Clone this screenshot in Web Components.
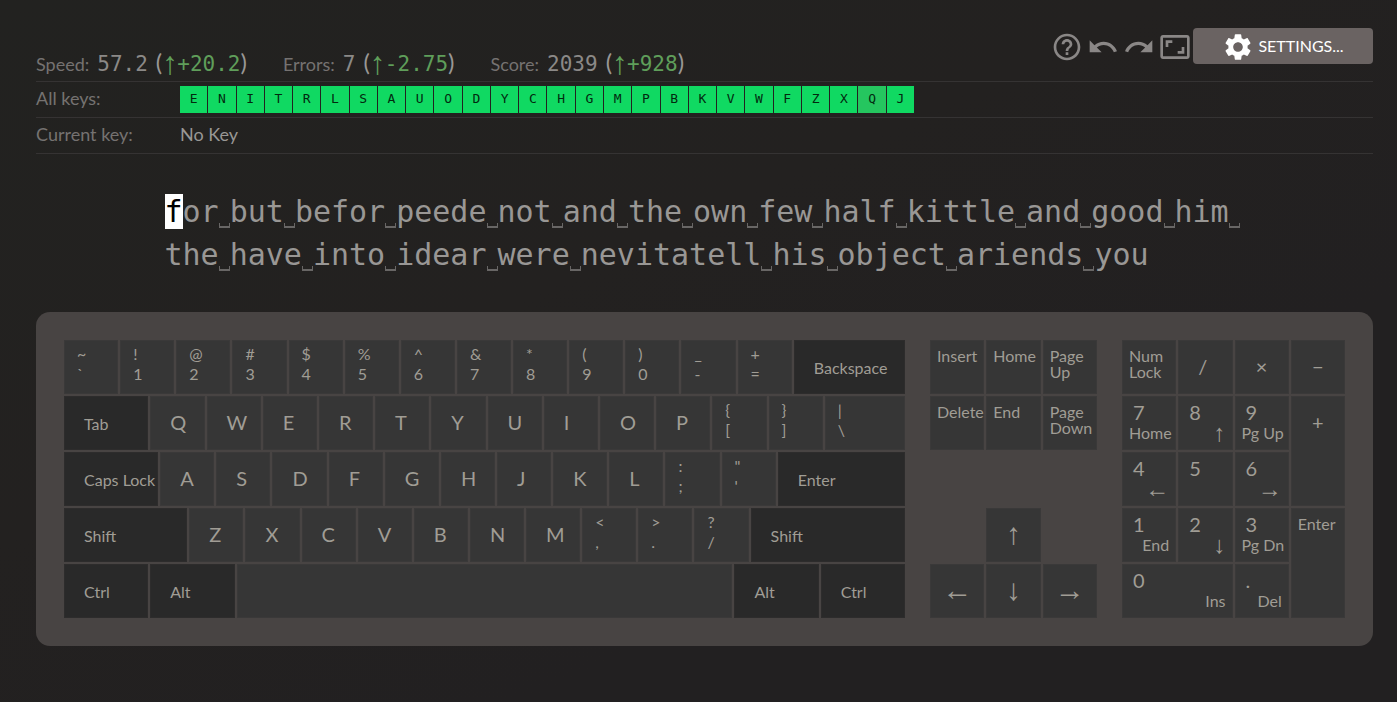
<!DOCTYPE html>
<html lang="en">
<head>
<meta charset="utf-8">
<title>Typing practice</title>
<style>
  body {
    margin: 0;
    min-height: 100vh;
    background: linear-gradient(155deg, #222220 0%, #232120 40%, #222021 70%, #222021 100%);
    color: #999795;
    font-family: Lato, "Noto Sans", sans-serif;
    --mono: "DejaVu Sans Mono", monospace;
    --arrow: "Liberation Serif", serif;
  }
</style>
</head>
<body>
<typing-app></typing-app>
<script>
const define = (name, html, setup) => {
  const template = document.createElement('template');
  template.innerHTML = html;
  customElements.define(name, class extends HTMLElement {
    constructor() {
      super();
      this.attachShadow({ mode: 'open' }).append(template.content.cloneNode(true));
    }
    connectedCallback() { if (setup) setup(this, this.shadowRoot); }
  });
};

/* One figure with its change, e.g. Speed: 57.2 (↑+20.2) */
define('metric-stat', `
<style>
  :host { display: flex; align-items: baseline; white-space: nowrap; line-height: 34px; font-size: 18px; }
  .label { color: #757271; margin-right: 8px; }
  .value, .delta { font: 21px/34px var(--mono); }
  .value { color: #8b8987; margin-right: 8px; }
  .paren { font-size: 24px; }
  .delta, .up { color: #5f9e5a; }
  .up { align-self: center; font: 32px/34px var(--arrow); width: 15px; text-align: center; }
</style>
<span class="label"><slot name="label"></slot></span><span class="value"><slot name="value"></slot></span><span class="paren">(</span><span class="up">↑</span><span class="delta"><slot name="delta"></slot></span><span class="paren">)</span>`);

/* Labelled line under the metrics */
define('info-row', `
<style>
  :host { display: flex; align-items: flex-start; height: 35px; line-height: 33px; border-bottom: 1px solid #353333; font-size: 18px; }
  .label { flex: 0 0 144px; color: #757271; }
  .content { flex: 1; min-width: 0; }
</style>
<span class="label"><slot name="label"></slot></span><div class="content"><slot></slot></div>`);

define('key-set', `
<style>
  :host { display: grid; grid-template-columns: repeat(26, minmax(0, 1fr)); gap: 1px; max-width: 734px; padding-top: 4px; }
  span { height: 27px; background: #10d962; color: #02290f; font: 13px/26px var(--mono); text-align: center; }
  .weak { background: #25c65f; }
</style>`, (host, root) => {
  for (const letter of host.getAttribute('letters')) {
    const tile = document.createElement('span');
    tile.textContent = letter;
    if (host.getAttribute('weak') === letter) tile.className = 'weak';
    root.append(tile);
  }
});

define('icon-button', `
<style>
  :host { display: block; }
  button { display: flex; align-items: center; justify-content: center; width: 36px; height: 36px; padding: 0; border: 0; background: none; color: #8a8786; cursor: pointer; }
</style>
<button type="button"><slot></slot></button>`, (host, root) => {
  root.querySelector('button').setAttribute('aria-label', host.getAttribute('label'));
});

define('settings-button', `
<style>
  :host { display: block; }
  button { display: flex; align-items: center; justify-content: center; gap: 4px; width: 180px; height: 36px; padding: 0; border: 0; border-radius: 4px; background: #6a6362; color: #fff; font: 16px/36px Lato, sans-serif; cursor: pointer; }
</style>
<button type="button"><slot name="icon"></slot><slot></slot></button>`);

/* Text to be typed; the first letter carries the cursor */
define('practice-text', `
<style>
  :host { display: flex; flex-wrap: wrap; max-width: 1080px; margin: 0 auto; font: 30px/43px var(--mono); color: #999795; }
  .word { white-space: nowrap; }
  .space { display: inline-block; box-sizing: border-box; width: 11px; height: 5px; overflow: hidden; border: solid #686665; border-width: 0 1px 2px; vertical-align: -6px; }
  .cursor { background: #fff; color: #000; }
</style>`, (host, root) => {
  const words = host.getAttribute('text').split(' ');
  words.forEach((word, i) => {
    const el = document.createElement('span');
    el.className = 'word';
    if (i === 0) {
      const cursor = document.createElement('span');
      cursor.className = 'cursor';
      cursor.textContent = word[0];
      el.append(cursor, word.slice(1));
    } else el.textContent = word;
    if (i < words.length - 1) {
      const space = document.createElement('span');
      space.className = 'space';
      space.textContent = ' ';
      el.append(space);
    }
    root.append(el);
  });
});

/* Key cap. The kind attribute picks the legend layout. */
define('key-cap', `
<style>
  :host { box-sizing: border-box; display: block; min-width: 0; background: #363636; border: 1px solid #3a3939; color: #a09d95; font-size: 16px; white-space: nowrap; }
  :host([kind="letter"]) { padding-left: 19px; font-size: 20px; line-height: 50px; }
  :host([kind="action"]) { padding-left: 19px; line-height: 54px; background: #292929; border-color: #2d2c2c; }
  :host([kind="dual"]) { padding: 3px 0 0 12px; line-height: 20px; }
  :host([kind="label"]) { padding: 7px 0 0 6px; line-height: 16px; }
  :host([kind="label"]) .top { white-space: pre-line; }
  :host([kind="arrow"]) { font: 30px/50px var(--arrow); text-align: center; }
  :host([kind="sign"]) { font-size: 20px; line-height: 50px; text-align: center; }
  :host([kind="num"]) { padding: 3px 6px 0; font-size: 20px; line-height: 24px; }
  :host([kind="num"]) .top { padding-left: 4px; }
  .top, .bottom { display: block; }
  :host([kind="num"]) .bottom { font-size: 16px; line-height: 18px; text-align: right; }
  :host([kind="num"]) .bottom.pointer { font-family: var(--arrow); font-size: 24px; }
</style>
<span class="top"></span><span class="bottom"></span>`, (host, root) => {
  const bottom = root.querySelector('.bottom');
  root.querySelector('.top').textContent = host.getAttribute('top') || '';
  bottom.textContent = host.getAttribute('bottom') || '';
  bottom.classList.toggle('pointer', /[←↑↓→]/.test(bottom.textContent));
});

const cap = (kind, top, bottom, css) => {
  const key = document.createElement('key-cap');
  key.setAttribute('kind', kind);
  key.setAttribute('top', top);
  if (bottom) key.setAttribute('bottom', bottom);
  if (css) key.style.cssText = css;
  return key;
};
const letters = s => [...s].map(c => ['letter', c, '', 54]);
const duals = s => s.split(' ').map(p => ['dual', p[0], p[1], 54]);

define('key-block', `
<style>
  :host { display: flex; flex-direction: column; gap: 2px; min-width: 0; }
  .row { display: grid; grid-auto-rows: 54px; gap: 2px; }
</style>`, (host, root) => {
  const rows = [
    [...duals('~\` !1 @2 #3 $4 %5 ^6 &7 *8 (9 )0 _- +='), ['action', 'Backspace', '', 111]],
    [['action', 'Tab', '', 84], ...letters('QWERTYUIOP'), ...duals('{[ }]'), ['dual', '|', '\\', 80]],
    [['action', 'Caps Lock', '', 94], ...letters('ASDFGHJKL'), ...duals(':; "\''), ['action', 'Enter', '', 127]],
    [['action', 'Shift', '', 123], ...letters('ZXCVBNM'), ...duals('<, >. ?/'), ['action', 'Shift', '', 154]],
    [['action', 'Ctrl', '', 84], ['action', 'Alt', '', 84], ['letter', '', '', 494], ['action', 'Alt', '', 84], ['action', 'Ctrl', '', 84]]
  ];
  for (const row of rows) {
    const line = document.createElement('div');
    line.className = 'row';
    line.style.gridTemplateColumns = row.map(key => `minmax(0, ${key[3]}fr)`).join(' ');
    for (const [kind, top, bottom] of row) line.append(cap(kind, top, bottom));
    root.append(line);
  }
});

const gridBlock = (name, columns, keys) => define(name, `
<style>
  :host { display: grid; grid-template: repeat(5, 54px) / repeat(${columns}, minmax(0, 1fr)); gap: 2px; min-width: 0; }
</style>`, (host, root) => {
  for (const [kind, top, bottom, area] of keys) root.append(cap(kind, top, bottom, `grid-area: ${area}`));
});

gridBlock('nav-block', 3, [
  ['label', 'Insert', '', '1/1'], ['label', 'Home', '', '1/2'], ['label', 'Page\nUp', '', '1/3'],
  ['label', 'Delete', '', '2/1'], ['label', 'End', '', '2/2'], ['label', 'Page\nDown', '', '2/3'],
  ['arrow', '↑', '', '4/2'], ['arrow', '←', '', '5/1'], ['arrow', '↓', '', '5/2'], ['arrow', '→', '', '5/3']
]);
gridBlock('num-block', 4, [
  ['label', 'Num\nLock', '', '1/1'], ['letter', '/', '', '1/2'], ['sign', '×', '', '1/3'], ['sign', '−', '', '1/4'],
  ['num', '7', 'Home', '2/1'], ['num', '8', '↑', '2/2'], ['num', '9', 'Pg Up', '2/3'], ['sign', '+', '', '2/4/4'],
  ['num', '4', '←', '3/1'], ['num', '5', '', '3/2'], ['num', '6', '→', '3/3'],
  ['num', '1', 'End', '4/1'], ['num', '2', '↓', '4/2'], ['num', '3', 'Pg Dn', '4/3'], ['label', 'Enter', '', '4/4/6'],
  ['num', '0', 'Ins', '5/1/6/3'], ['num', '.', 'Del', '5/3']
]);

define('virtual-keyboard', `
<style>
  :host { display: grid; grid-template-columns: 841fr 167fr 223fr; gap: 25px; padding: 28px; border-radius: 14px; background: #484443; }
</style>
<key-block></key-block><nav-block></nav-block><num-block></num-block>`);

define('typing-app', `
<style>
  :host { display: block; padding: 28px 24px 56px 36px; }
  header { display: flex; justify-content: space-between; height: 53px; border-bottom: 1px solid #353333; }
  .metrics { display: flex; gap: 36px; align-self: flex-end; }
  .tools { display: flex; }
  svg { display: block; width: 32px; height: 32px; fill: currentColor; }
  .icon { padding-top: 2px; }
  practice-text { padding: 36px 0; }
</style>
<header>
  <div class="metrics">
    <metric-stat><span slot="label">Speed:</span><span slot="value">57.2</span><span slot="delta">+20.2</span></metric-stat>
    <metric-stat><span slot="label">Errors:</span><span slot="value">7</span><span slot="delta">-2.75</span></metric-stat>
    <metric-stat><span slot="label">Score:</span><span slot="value">2039</span><span slot="delta">+928</span></metric-stat>
  </div>
  <div class="tools">
    <icon-button label="Help"><svg class="icon" viewBox="0 0 24 24"><path d="M11 18h2v-2h-2v2zm1-16C6.48 2 2 6.48 2 12s4.48 10 10 10 10-4.48 10-10S17.52 2 12 2zm0 18c-4.41 0-8-3.59-8-8s3.59-8 8-8 8 3.59 8 8-3.59 8-8 8zm0-14c-2.21 0-4 1.79-4 4h2c0-1.1.9-2 2-2s2 .9 2 2c0 2-3 1.75-3 5h2c0-2.25 3-2.5 3-5 0-2.21-1.79-4-4-4z"/></svg></icon-button>
    <icon-button label="Previous"><svg class="icon" viewBox="0 0 24 24"><path d="M12.5 8c-2.65 0-5.05.99-6.9 2.6L2 7v9h9l-3.62-3.62c1.39-1.16 3.16-1.88 5.12-1.88 3.54 0 6.55 2.31 7.6 5.5l2.37-.78C21.08 11.03 17.15 8 12.5 8z"/></svg></icon-button>
    <icon-button label="Next"><svg class="icon" viewBox="0 0 24 24"><path d="M18.4 10.6C16.55 8.99 14.15 8 11.5 8c-4.65 0-8.58 3.03-9.96 7.22L3.9 16c1.05-3.19 4.05-5.5 7.6-5.5 1.95 0 3.73.72 5.12 1.88L13 16h9V7l-3.6 3.6z"/></svg></icon-button>
    <icon-button label="Full screen"><svg class="icon" viewBox="0 0 24 24"><path d="M19 12h-2v3h-3v2h5v-5zM7 9h3V7H5v5h2V9zm14-6H3c-1.1 0-2 .9-2 2v14c0 1.1.9 2 2 2h18c1.1 0 2-.9 2-2V5c0-1.1-.9-2-2-2zm0 16.01H3V4.99h18v14.02z"/></svg></icon-button>
    <settings-button><svg slot="icon" class="icon" viewBox="0 0 24 24"><path d="M19.14 12.94c.04-.3.06-.61.06-.94 0-.32-.02-.64-.07-.94l2.03-1.58c.18-.14.23-.41.12-.61l-1.92-3.32c-.12-.22-.37-.29-.59-.22l-2.39.96c-.5-.38-1.03-.7-1.62-.94l-.36-2.54c-.04-.24-.24-.41-.48-.41h-3.84c-.24 0-.43.17-.47.41l-.36 2.54c-.59.24-1.13.57-1.62.94l-2.39-.96c-.22-.08-.47 0-.59.22L2.74 8.87c-.12.21-.08.47.12.61l2.03 1.58c-.05.3-.09.63-.09.94s.02.64.07.94l-2.03 1.58c-.18.14-.23.41-.12.61l1.92 3.32c.12.22.37.29.59.22l2.39-.96c.5.38 1.03.7 1.62.94l.36 2.54c.05.24.24.41.48.41h3.84c.24 0 .44-.17.47-.41l.36-2.54c.59-.24 1.13-.56 1.62-.94l2.39.96c.22.08.47 0 .59-.22l1.92-3.32c.12-.22.07-.47-.12-.61l-2.01-1.58zM12 15.6c-1.98 0-3.6-1.62-3.6-3.6s1.62-3.6 3.6-3.6 3.6 1.62 3.6 3.6-1.62 3.6-3.6 3.6z"/></svg>SETTINGS...</settings-button>
  </div>
</header>
<info-row><span slot="label">All keys:</span><key-set letters="ENITRLSAUODYCHGMPBKVWFZXQJ" weak="Q"></key-set></info-row>
<info-row><span slot="label">Current key:</span>No Key</info-row>
<practice-text text="for but befor peede not and the own few half kittle and good him the have into idear were nevitatell his object ariends you"></practice-text>
<virtual-keyboard></virtual-keyboard>`);
</script>
</body>
</html>
